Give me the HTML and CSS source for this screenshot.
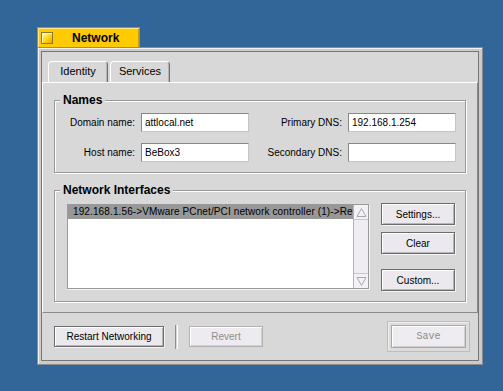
FILE: index.html
```html
<!DOCTYPE html>
<html lang="en">
<head>
    <meta charset="UTF-8">
    <title>Network</title>
    <link rel="stylesheet" href="styles.css">
</head>
<body>
    <div class="desktop">
        <div class="window">
            <div class="title-tab">
                <span class="close-box"></span>
                <span class="title">Network</span>
            </div>
            <div class="frame">
                <div class="window-body">
                    <div class="tabs">
                        <div class="tab active">Identity</div>
                        <div class="tab">Services</div>
                    </div>

                    <div class="pane">
                        <fieldset class="box">
                            <legend>Names</legend>
                            <div class="names-grid">
                                <label>Domain name:</label>
                                <input class="field" type="text" value="attlocal.net">
                                <label>Primary DNS:</label>
                                <input class="field" type="text" value="192.168.1.254">
                                <label>Host name:</label>
                                <input class="field" type="text" value="BeBox3">
                                <label>Secondary DNS:</label>
                                <input class="field" type="text" value="">
                            </div>
                        </fieldset>

                        <fieldset class="box interfaces">
                            <legend>Network Interfaces</legend>
                            <div class="ni-row">
                                <div class="list">
                                    <div class="list-items">
                                        <div class="list-row selected">192.168.1.56-&gt;VMware PCnet/PCI network controller (1)-&gt;Re</div>
                                    </div>
                                    <div class="scrollbar">
                                        <div class="arrow">
                                            <svg width="13" height="13" viewBox="0 0 13 13"><polygon points="6.5,2.5 11,10.5 2,10.5" fill="none" stroke="#a9a9a9"/></svg>
                                        </div>
                                        <div class="track"></div>
                                        <div class="arrow">
                                            <svg width="13" height="13" viewBox="0 0 13 13"><polygon points="2,2.5 11,2.5 6.5,10.5" fill="none" stroke="#a9a9a9"/></svg>
                                        </div>
                                    </div>
                                </div>
                                <div class="side-buttons">
                                    <button class="button">Settings...</button>
                                    <button class="button clear">Clear</button>
                                    <button class="button custom">Custom...</button>
                                </div>
                            </div>
                        </fieldset>
                    </div>

                    <div class="bottom-bar">
                        <button class="button restart">Restart Networking</button>
                        <span class="separator"></span>
                        <button class="button revert" disabled>Revert</button>
                        <div class="default-frame">
                            <button class="button save" disabled>Save</button>
                        </div>
                    </div>
                </div>
            </div>
        </div>
    </div>
</body>
</html>
```

FILE: styles.css
```css
body {
    margin: 0;
    height: 391px;
    background: #336698;
    font-family: "Liberation Sans", Arial, sans-serif;
    font-size: 10px;
    color: #000;
    overflow: hidden;
}

.desktop {
    padding: 27px 0 0 37px;
}

.window {
    width: 446px;
}

/* yellow title tab */
.title-tab {
    display: flex;
    align-items: center;
    width: 103px;
    height: 20px;
    box-sizing: border-box;
    background: #ffcb00;
    border: 1px solid #8c8c8c;
    border-bottom: none;
    box-shadow: inset 1px 1px #ffe680, inset -1px 0 #c99f00;
}

.close-box {
    width: 12px;
    height: 12px;
    margin-left: 3px;
    box-sizing: border-box;
    border: 1px solid #8a7a3a;
    background: linear-gradient(135deg, #fffbe6 0%, #ffe24d 35%, #ffcb00 65%, #e8a400 100%);
    box-shadow: inset 1px 1px #fff6c0;
}

.title {
    margin-left: 19px;
    font-size: 12px;
    font-weight: bold;
}

/* window border */
.frame {
    border: 1px solid #8c8c8c;
    padding: 3px;
    background: #cbcbcb;
    box-shadow: inset 1px 1px #f2f2f2;
}

.window-body {
    display: flex;
    flex-direction: column;
    border: 1px solid #777;
    background: #d8d8d8;
    padding-top: 9px;
}

/* tabs */
.tabs {
    display: flex;
    gap: 2px;
    padding-left: 6px;
    height: 21px;
}

.tab {
    width: 60px;
    box-sizing: border-box;
    border: 1px solid;
    border-color: #fff #6f6f6f transparent #fff;
    border-bottom: none;
    border-radius: 4px 4px 0 0;
    box-shadow: inset -1px 0 #b4b4b4;
    text-align: center;
    line-height: 19px;
    font-size: 11px;
}

.pane {
    border: 1px solid;
    border-color: #fff #8a8a8a #8a8a8a #fff;
    padding: 10px 11px;
}

/* etched group boxes */
.box {
    margin: 0;
    padding: 0;
    min-width: 0;
    border: 1px solid #999;
    box-shadow: inset 1px 1px #fff, 1px 1px #fff;
}

.box legend {
    margin-left: 5px;
    padding: 0 3px;
    background: #d8d8d8;
    font-size: 12px;
    font-weight: bold;
    line-height: 14px;
}

.interfaces {
    margin-top: 10px;
}

.names-grid {
    display: grid;
    grid-template-columns: 80px 108px 1fr 108px;
    grid-auto-rows: 19px;
    column-gap: 6px;
    row-gap: 11px;
    align-items: center;
    padding: 6px 9px 10px 0;
}

.names-grid label {
    text-align: right;
}

.field {
    height: 19px;
    box-sizing: border-box;
    margin: 0;
    padding: 0 3px;
    border: 1px solid;
    border-color: #888 #c4c4c4 #c4c4c4 #888;
    background: #fff;
    font-family: inherit;
    font-size: 10px;
    color: #000;
    outline: none;
}

/* interface list */
.ni-row {
    display: flex;
    gap: 12px;
    padding: 6px 10px 10px 12px;
}

.list {
    display: flex;
    width: 302px;
    height: 85px;
    margin-top: 1px;
    box-sizing: border-box;
    border: 1px solid #999;
    background: #fff;
    box-shadow: 1px 1px #f4f4f4;
}

.list-items {
    flex: 1;
    overflow: hidden;
}

.list-row {
    height: 14px;
    line-height: 14px;
    padding-left: 5px;
    white-space: nowrap;
    letter-spacing: 0.12px;
}

.list-row.selected {
    background: #989898;
}

.scrollbar {
    display: flex;
    flex-direction: column;
    width: 14px;
    border-left: 1px solid #b4b4b4;
    background: #efedf1;
}

.arrow {
    height: 14px;
    display: flex;
    align-items: center;
    justify-content: center;
    background: #f3f1f5;
    border-bottom: 1px solid #c8c8c8;
}

.arrow:last-child {
    border-bottom: none;
    border-top: 1px solid #c8c8c8;
}

.track {
    flex: 1;
}

.side-buttons {
    display: flex;
    flex-direction: column;
    width: 74px;
}

/* buttons */
.button {
    height: 22px;
    box-sizing: border-box;
    margin: 0;
    padding: 0;
    border: 1px solid #6c6c6c;
    background: #ebe9ed;
    box-shadow: inset 1px 1px #fff, inset -1px -1px #b6b6b6, 1px 1px #f4f4f4;
    font-family: inherit;
    font-size: 10px;
    color: #000;
}

.button.clear {
    margin-top: 7px;
}

.button.custom {
    margin-top: 15px;
}

.bottom-bar {
    display: flex;
    align-items: center;
    height: 47px;
    padding: 0 8px 0 12px;
}

.button.restart {
    width: 110px;
    height: 21px;
}

.separator {
    width: 1px;
    height: 24px;
    margin: 0 11px;
    border-left: 1px solid #8e8e8e;
    border-right: 1px solid #fff;
}

.button.revert {
    width: 74px;
    height: 21px;
    border-color: #b2b2b2;
    background: #edebef;
    box-shadow: inset 1px 1px #fff, inset -1px -1px #d0d0d0;
    color: #8e8e8e;
}

.default-frame {
    margin-left: auto;
    padding: 3px;
    border: 1px solid #bdbdbd;
    background: #dcdcdc;
    box-shadow: inset 1px 1px #eeeeee;
}

.button.save {
    display: block;
    width: 75px;
    height: 23px;
    border-color: #a8a8a8;
    background: #eeecf0;
    box-shadow: inset 1px 1px #fff, inset -1px -1px #cfcfcf;
    font-family: "Liberation Mono", "Courier New", monospace;
    color: #8a8a8a;
}
```
